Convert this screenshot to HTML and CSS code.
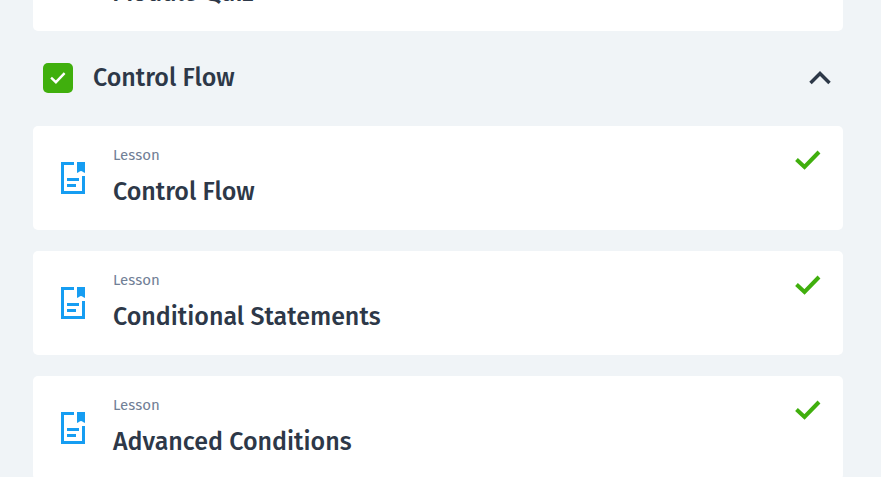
FILE: index.html
```html
<!DOCTYPE html>
<html lang="en">
<head>
<meta charset="utf-8">
<meta name="viewport" content="width=device-width, initial-scale=1">
<title>Course outline</title>
<link rel="stylesheet" href="styles.css">
</head>
<body>
<svg class="sprite" aria-hidden="true">
  <symbol id="lesson" viewBox="0 0 24 32">
    <path d="M13 1.5H1.5v29h21V14" fill="none" stroke="currentColor" stroke-width="3"/>
    <path d="M16 0h8v11l-2-1q-2-2-4 0l-2 1z" fill="currentColor"/>
    <path d="M6 17.5h12M6 23.5h9" fill="none" stroke="currentColor" stroke-width="3"/>
  </symbol>
  <symbol id="check" viewBox="0 0 26 20">
    <path d="M1.500 9.500l8 7.500L24 2" fill="none" stroke="currentColor" stroke-width="4"/>
  </symbol>
</svg>
<main class="outline">
  <ul class="items">
    <li class="card card-scrolled">
      <svg class="type-icon"><use href="#lesson"/></svg>
      <div class="text"><p class="kind">Quiz</p><h3 class="title">Module Quiz</h3></div>
      <svg class="done" role="img" aria-label="Completed"><use href="#check"/></svg>
    </li>
  </ul>
  <section>
    <header class="module">
      <span class="badge"><svg class="badge-check" role="img" aria-label="Module completed"><use href="#check"/></svg></span>
      <h2 class="title">Control Flow</h2>
      <button class="toggle" type="button" aria-label="Collapse Control Flow" aria-expanded="true">
        <svg class="chevron" viewBox="0 0 22 14"><path d="M1.500 12L11 2.500l9.500 9.500" fill="none" stroke="currentColor" stroke-width="3.500"/></svg>
      </button>
    </header>
    <ul class="items">
      <li class="card">
        <svg class="type-icon"><use href="#lesson"/></svg>
        <div class="text"><p class="kind">Lesson</p><h3 class="title">Control Flow</h3></div>
        <svg class="done" role="img" aria-label="Completed"><use href="#check"/></svg>
      </li>
      <li class="card">
        <svg class="type-icon"><use href="#lesson"/></svg>
        <div class="text"><p class="kind">Lesson</p><h3 class="title">Conditional Statements</h3></div>
        <svg class="done" role="img" aria-label="Completed"><use href="#check"/></svg>
      </li>
      <li class="card">
        <svg class="type-icon"><use href="#lesson"/></svg>
        <div class="text"><p class="kind">Lesson</p><h3 class="title">Advanced Conditions</h3></div>
        <svg class="done" role="img" aria-label="Completed"><use href="#check"/></svg>
      </li>
    </ul>
  </section>
</main>
</body>
</html>
```
FILE: styles.css
```css
* { box-sizing: border-box; }
body {
  margin: 0;
  overflow: hidden;
  background: #f0f4f7;
  color: #2d3848;
  font-family: "Fira Sans", "Noto Sans", sans-serif;
}
h2, h3, p, ul { margin: 0; padding: 0; }
.sprite { display: none; }
.outline { padding: 0 38px 0 33px; }
.items {
  display: flex;
  flex-direction: column;
  gap: 21px;
  list-style: none;
}
.card {
  display: flex;
  align-items: center;
  padding: 20px 22px 20px 28px;
  border-radius: 5px;
  background: #fff;
}
/* The list opens scrolled part of the way past this card. */
.card-scrolled { margin-top: -73px; }
.type-icon {
  width: 24px;
  height: 32px;
  color: #169df2;
}
.text {
  flex: 1;
  display: flex;
  flex-direction: column;
  gap: 10px;
  margin-left: 28px;
}
.kind {
  color: #718096;
  font-size: 15px;
  line-height: 18px;
}
.title {
  font-size: 25px;
  font-weight: 500;
  line-height: 36px;
}
.done {
  align-self: flex-start;
  width: 26px;
  height: 20px;
  margin-top: 4px;
  color: #40af0d;
}
.module {
  display: flex;
  align-items: center;
  gap: 20px;
  padding: 29px 10px 30px;
}
.badge {
  display: grid;
  place-items: center;
  width: 30px;
  height: 30px;
  border-radius: 5px;
  background: #40af0d;
  color: #fff;
}
.badge-check { width: 16px; height: 12px; }
.toggle {
  display: flex;
  margin-left: auto;
  padding: 2px;
  border: 0;
  background: none;
  color: inherit;
  cursor: pointer;
}
.chevron { width: 22px; height: 14px; }
```
